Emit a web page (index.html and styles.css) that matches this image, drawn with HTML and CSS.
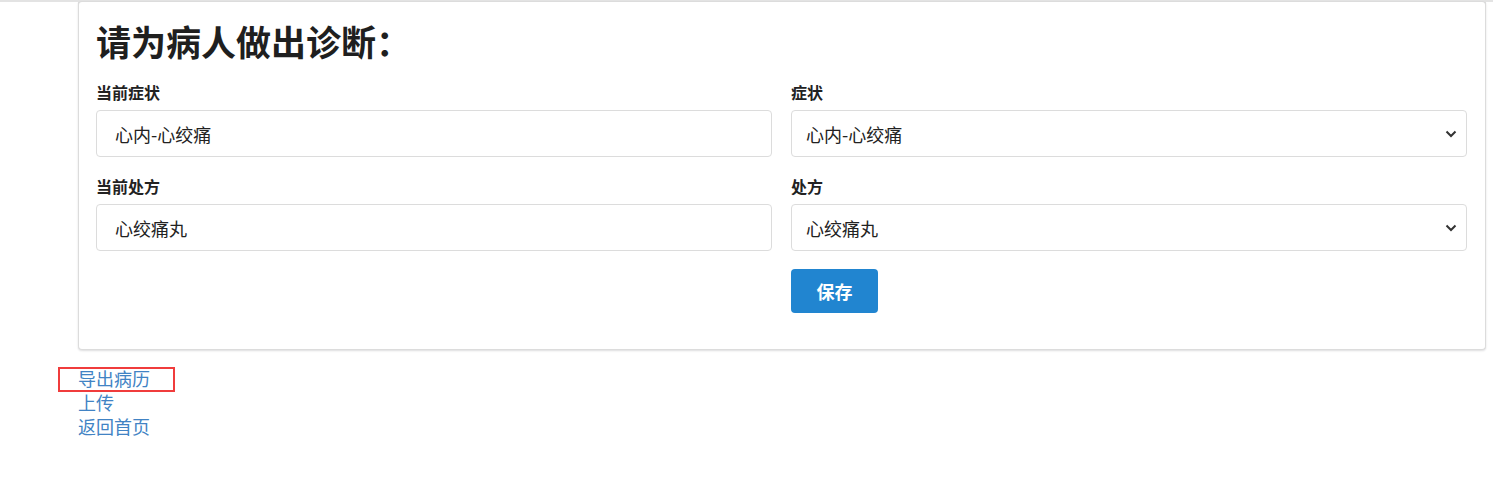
FILE: index.html
```html
<!DOCTYPE html>
<html lang="zh-CN">
<head>
<meta charset="utf-8">
<title>诊断</title>
<link rel="stylesheet" href="styles.css">
</head>
<body>
<div class="topline"></div>
<div class="page">
  <div class="card">
    <h1 class="title">请为病人做出诊断：</h1>
    <div class="grid">
      <div class="field">
        <label class="label">当前症状</label>
        <input class="input" type="text" value="心内-心绞痛" readonly>
      </div>
      <div class="field">
        <label class="label">症状</label>
        <div class="select-wrap">
          <select class="select"><option>心内-心绞痛</option></select>
          <svg class="chevron" width="12" height="8" viewBox="0 0 12 8"><path d="M1.5 1.5 L6 6 L10.5 1.5" fill="none" stroke="#333" stroke-width="2"/></svg>
        </div>
      </div>
      <div class="field">
        <label class="label">当前处方</label>
        <input class="input" type="text" value="心绞痛丸" readonly>
      </div>
      <div class="field">
        <label class="label">处方</label>
        <div class="select-wrap">
          <select class="select"><option>心绞痛丸</option></select>
          <svg class="chevron" width="12" height="8" viewBox="0 0 12 8"><path d="M1.5 1.5 L6 6 L10.5 1.5" fill="none" stroke="#333" stroke-width="2"/></svg>
        </div>
      </div>
      <div class="field"></div>
      <div class="field">
        <button class="btn" type="button">保存</button>
      </div>
    </div>
  </div>
  <div class="links">
    <a class="link marked" href="#">导出病历</a>
    <a class="link" href="#">上传</a>
    <a class="link" href="#">返回首页</a>
  </div>
</div>
</body>
</html>
```

FILE: styles.css
```css
*, *::before, *::after { box-sizing: border-box; }
html, body { margin: 0; padding: 0; background: #fff; }
body {
  font-family: "Noto Sans CJK SC", "Liberation Sans", sans-serif;
  color: #222;
}
.topline { height: 2px; background: #e3e3e3; }
.page { padding-left: 78px; }
.card {
  width: 1408px;
  border: 1px solid #dcdcdc;
  border-top: none;
  border-radius: 0 0 4px 4px;
  box-shadow: 0 1px 2px 0 rgba(34, 36, 38, 0.15);
  padding: 18px 18px 36px 17px;
  background: #fff;
  position: relative;
}
.card::before {
  content: "";
  position: absolute;
  left: -1px; right: -1px; top: -1px; height: 6px;
  border: 1px solid #dcdcdc;
  border-bottom: none;
  border-radius: 4px 4px 0 0;
}
.title {
  margin: 0 0 20px;
  font-size: 35px;
  line-height: 42px;
  font-weight: 700;
  color: #1f1f1f;
}
.grid {
  display: grid;
  grid-template-columns: 1fr 1fr;
  column-gap: 19px;
  row-gap: 19px;
}
.field { display: flex; flex-direction: column; }
.label {
  font-size: 16px;
  line-height: 20px;
  font-weight: 700;
  color: #222;
  margin-bottom: 8px;
}
.input, .select {
  width: 100%;
  height: 47px;
  border: 1px solid #dcdcdc;
  border-radius: 4px;
  font-family: inherit;
  font-size: 18px;
  color: #222;
  background: #fff;
  outline: none;
}
.input { padding: 0 18px; }
.select-wrap { position: relative; }
.select {
  -webkit-appearance: none;
  appearance: none;
  padding: 0 40px 0 14px;
}
.chevron {
  position: absolute;
  right: 10px;
  top: 20px;
  pointer-events: none;
}
.btn {
  align-self: flex-start;
  margin-top: -1px;
  width: 87px;
  height: 44px;
  border: none;
  border-radius: 4px;
  background: #2185d0;
  color: #fff;
  font-family: inherit;
  font-size: 18px;
  font-weight: 700;
}
.links {
  display: flex;
  flex-direction: column;
  align-items: flex-start;
  margin-top: 16px;
}
.link {
  font-size: 18px;
  line-height: 24px;
  color: #4183c4;
  text-decoration: none;
}
.marked { position: relative; }
.marked::after {
  content: "";
  position: absolute;
  left: -20px;
  top: 1px;
  width: 117px;
  height: 25px;
  border: 2px solid #f03c3c;
}
```
